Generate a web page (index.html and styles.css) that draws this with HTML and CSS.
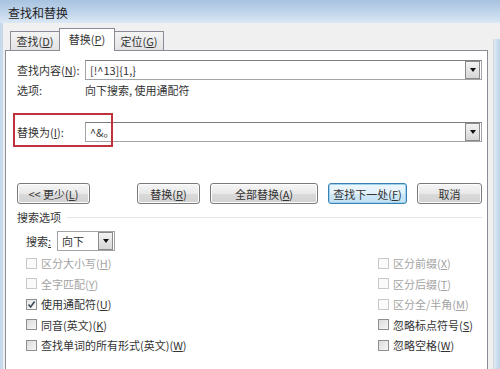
FILE: index.html
```html
<!DOCTYPE html>
<html lang="zh-CN">
<head>
  <meta charset="UTF-8">
  <title>查找和替换</title>
  <link rel="stylesheet" href="styles.css">
</head>
<body>
  <div class="window">
    <div class="titlebar">查找和替换</div>
    <div class="frame">
      <div class="client">
        <div class="tabs">
          <div class="tab tab-find">查找(<u>D</u>)</div>
          <div class="tab tab-rep active">替换(<u>P</u>)</div>
          <div class="tab tab-go">定位(<u>G</u>)</div>
        </div>
        <div class="panel">
          <div class="row row-find">
            <label class="label">查找内容(<u>N</u>):</label>
            <div class="combo">
              <span class="combo-text">[!^13]{1,}</span>
              <span class="drop"><i class="arrow"></i></span>
            </div>
          </div>
          <div class="row row-opts">
            <span class="label">选项:</span>
            <span class="value">向下搜索, 使用通配符</span>
          </div>
          <div class="row row-replace">
            <label class="label">替换为(<u>I</u>):</label>
            <div class="combo">
              <span class="combo-text">^&amp;。</span>
              <span class="drop"><i class="arrow"></i></span>
            </div>
            <div class="mark"></div>
          </div>
          <div class="buttons">
            <button class="btn btn-less">&lt;&lt; 更少(<u>L</u>)</button>
            <button class="btn btn-rep">替换(<u>R</u>)</button>
            <button class="btn btn-all">全部替换(<u>A</u>)</button>
            <button class="btn btn-next">查找下一处(<u>F</u>)</button>
            <button class="btn btn-cancel">取消</button>
          </div>
          <div class="group-title"><span>搜索选项</span></div>
          <div class="search-row">
            <span class="label-s">搜索<u>:</u></span>
            <div class="select">
              <span class="select-text">向下</span>
              <span class="drop"><i class="arrow"></i></span>
            </div>
          </div>
          <div class="checks">
            <div class="check disabled"><i class="box"></i>区分大小写(<u>H</u>)</div>
            <div class="check disabled"><i class="box"></i>区分前缀(<u>X</u>)</div>
            <div class="check disabled"><i class="box"></i>全字匹配(<u>Y</u>)</div>
            <div class="check disabled"><i class="box"></i>区分后缀(<u>T</u>)</div>
            <div class="check"><i class="box checked"><svg viewBox="0 0 9 9" width="9" height="9"><path d="M1.5 4.5 L3.6 7 L7.6 1.5" fill="none" stroke="#3a4a5c" stroke-width="1.6"/></svg></i>使用通配符(<u>U</u>)</div>
            <div class="check disabled"><i class="box"></i>区分全/半角(<u>M</u>)</div>
            <div class="check"><i class="box"></i>同音(英文)(<u>K</u>)</div>
            <div class="check"><i class="box"></i>忽略标点符号(<u>S</u>)</div>
            <div class="check"><i class="box"></i>查找单词的所有形式(英文)(<u>W</u>)</div>
            <div class="check"><i class="box"></i>忽略空格(<u>W</u>)</div>
          </div>
        </div>
      </div>
      <div class="edge"></div>
    </div>
  </div>
</body>
</html>
```

FILE: styles.css
```css
html, body {
  margin: 0;
  padding: 0;
  width: 500px;
  height: 369px;
  overflow: hidden;
  font-family: "Noto Sans CJK SC", "Liberation Sans", sans-serif;
  font-size: 11px;
  color: #333;
}

u {
  text-decoration: underline;
  text-underline-offset: 1px;
}

.window {
  height: 369px;
  display: flex;
  flex-direction: column;
  background: #f0f0f0;
}

.titlebar {
  height: 23px;
  line-height: 25px;
  padding-left: 8px;
  font-size: 12px;
  color: #1e1e1e;
  background: linear-gradient(#a7c3e0, #c9dbee 70%, #dce8f4);
}

.frame {
  flex: 1;
  display: flex;
  border-left: 3px solid #c8d9ec;
}

.client {
  flex: 1;
  padding: 6px 5px 0 2px;
  display: flex;
  flex-direction: column;
}

.edge {
  width: 7px;
  margin-top: 16px;
  background: linear-gradient(90deg, #dfe9f4, #bcd2e9);
  border-left: 1px solid #d0d8e0;
}

/* вкладки */
.tabs {
  display: flex;
  padding-left: 5px;
  height: 21px;
  align-items: flex-end;
  position: relative;
  z-index: 1;
  white-space: nowrap;
}

.tab {
  height: 18px;
  line-height: 19px;
  border: 1px solid #898c95;
  border-bottom: none;
  margin-right: -1px;
  background: linear-gradient(#f4f4f4, #e3e3e3);
  text-align: center;
}

.tab-find { width: 48px; }
.tab-rep { width: 54px; }
.tab-go { width: 48px; }

.tab.active {
  height: 22px;
  line-height: 20px;
  background: #fff;
  margin-bottom: -1px;
}

.panel {
  flex: 1;
  background: #fff;
  border: 1px solid #898c95;
  border-bottom: none;
  padding: 9px 5px 0 11px;
}

.row {
  display: flex;
  align-items: center;
  position: relative;
  white-space: nowrap;
}

.label {
  width: 68px;
  flex: none;
}

.combo {
  flex: 1;
  height: 18px;
  border: 1px solid #a0a3a8;
  border-top-color: #7a7d82;
  display: flex;
  align-items: center;
  background: #fff;
}

.combo-text {
  flex: 1;
  padding-left: 4px;
}

.drop {
  width: 13px;
  height: 16px;
  margin-right: 1px;
  border: 1px solid #8a8a8a;
  background: linear-gradient(#f3f3f3, #d6d6d6);
  display: flex;
  align-items: center;
  justify-content: center;
}

.arrow {
  width: 0;
  height: 0;
  border-left: 3px solid transparent;
  border-right: 3px solid transparent;
  border-top: 4px solid #111;
}

.row-find {
  height: 20px;
}

.row-opts {
  height: 16px;
  margin-top: 2px;
}

.row-replace {
  height: 20px;
  margin-top: 24px;
}

/* красная рамка-выделение */
.mark {
  position: absolute;
  left: -4px;
  top: -9px;
  width: 96px;
  height: 30px;
  border: 2px solid #c0323a;
  pointer-events: none;
}

.buttons {
  display: flex;
  margin-top: 41px;
  gap: 10px;
  white-space: nowrap;
}

.btn {
  height: 21px;
  padding: 0;
  font-family: inherit;
  font-size: 11px;
  color: #333;
  border: 1px solid #7b7b7b;
  border-radius: 3px;
  background: linear-gradient(#f6f6f6, #e8e8e8 50%, #dadada 51%, #d2d2d2);
  box-shadow: inset 0 0 0 1px #fcfcfc;
}

.btn-less { width: 73px; }
.btn-rep { width: 63px; margin-left: 37px; }
.btn-all { width: 108px; }
.btn-next {
  width: 79px;
  border-color: #3c7fb1;
  box-shadow: inset 0 0 0 1px #9fd4f0;
  background: linear-gradient(#eef7fc, #e2f1fa 50%, #cfe8f6 51%, #c2e1f3);
}
.btn-cancel { width: 65px; }

.group-title {
  display: flex;
  align-items: center;
  height: 14px;
  margin-top: 6px;
}

.group-title::after {
  content: "";
  flex: 1;
  height: 1px;
  margin-left: 6px;
  background: #e4e4e4;
}

.search-row {
  display: flex;
  align-items: center;
  margin-top: 7px;
  padding-left: 9px;
  height: 20px;
}

.label-s {
  width: 31px;
}

.select {
  width: 56px;
  height: 18px;
  border: 1px solid #a0a3a8;
  display: flex;
  align-items: center;
}

.select-text {
  flex: 1;
  padding-left: 4px;
}

.checks {
  display: grid;
  grid-template-columns: 1fr 104px;
  grid-auto-rows: 20.5px;
  margin-top: 2px;
  padding-left: 9px;
  white-space: nowrap;
}

.check {
  display: flex;
  align-items: center;
}

.check.disabled {
  color: #a3a3a3;
}

.box {
  width: 11px;
  height: 11px;
  box-sizing: border-box;
  border: 1px solid #8f8f8f;
  background: linear-gradient(135deg, #dcdcdc, #f6f6f6);
  margin-right: 4px;
  display: flex;
  align-items: center;
  justify-content: center;
}

.check.disabled .box {
  border-color: #c8c8c8;
  background: #fafafa;
}

.box.checked {
  background: linear-gradient(135deg, #e6e6e6, #fbfbfb);
}
```
